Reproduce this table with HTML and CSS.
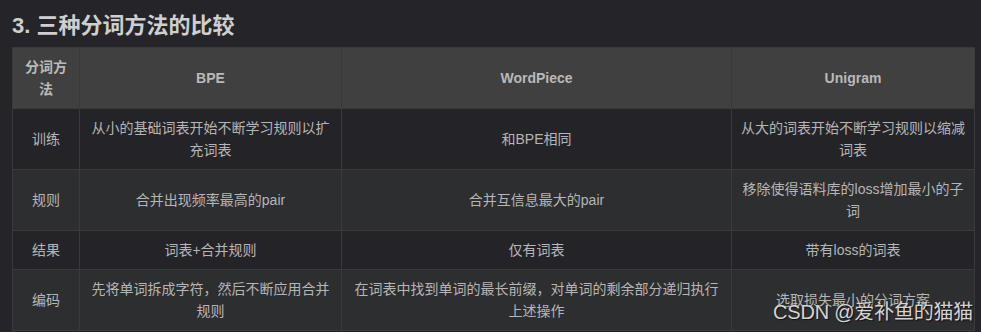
FILE: index.html
```html
<!DOCTYPE html>
<html lang="zh">
<head>
<meta charset="utf-8">
<link rel="stylesheet" href="styles.css">
</head>
<body>
<div class="page">
  <h3 class="title">3. 三种分词方法的比较</h3>
  <table class="cmp">
    <colgroup>
      <col class="c1"><col class="c2"><col class="c3"><col class="c4">
    </colgroup>
    <thead>
      <tr><th>分词方法</th><th>BPE</th><th>WordPiece</th><th>Unigram</th></tr>
    </thead>
    <tbody>
      <tr><td>训练</td><td>从小的基础词表开始不断学习规则以扩充词表</td><td>和BPE相同</td><td>从大的词表开始不断学习规则以缩减词表</td></tr>
      <tr><td>规则</td><td>合并出现频率最高的pair</td><td>合并互信息最大的pair</td><td>移除使得语料库的loss增加最小的子词</td></tr>
      <tr><td>结果</td><td>词表+合并规则</td><td>仅有词表</td><td>带有loss的词表</td></tr>
      <tr><td>编码</td><td>先将单词拆成字符，然后不断应用合并规则</td><td>在词表中找到单词的最长前缀，对单词的剩余部分递归执行上述操作</td><td>选取损失最小的分词方案</td></tr>
    </tbody>
  </table>
  <div class="watermark">CSDN @爱补鱼的猫猫</div>
</div>
</body>
</html>
```

FILE: styles.css
```css
html, body {
  margin: 0;
  padding: 0;
  background: #252529;
}
.page {
  position: relative;
  width: 981px;
  height: 332px;
  overflow: hidden;
  padding: 0 0 0 12px;
  box-sizing: border-box;
  font-family: "Liberation Sans", Arial, "Noto Sans CJK SC", sans-serif;
  color: #b6b6b6;
}
.title {
  margin: 0;
  padding-top: 13px;
  height: 47px;
  box-sizing: border-box;
  font-size: 22px;
  line-height: 26px;
  font-weight: bold;
  color: #cfcfcf;
}
.cmp {
  border-collapse: collapse;
  table-layout: fixed;
  width: 962px;
  font-size: 14px;
  line-height: 22px;
}
.c1 { width: 67px; }
.c2 { width: 262px; }
.c3 { width: 390px; }
.c4 { width: 243px; }
.cmp th, .cmp td {
  border: 1px solid #3a3a3c;
  padding: 8px 8px;
  text-align: center;
  vertical-align: middle;
}
.cmp th {
  background: #404040;
  font-weight: bold;
  color: #b9b9b9;
}
.cmp tbody tr:nth-child(odd) td {
  background: #242428;
}
.cmp tbody tr:nth-child(even) td {
  background: #2d2e30;
}
.watermark {
  position: absolute;
  left: 773px;
  top: 299px;
  font-size: 20px;
  line-height: 26px;
  color: #d4d4d4;
  text-shadow: 1px 1px 1px #111;
  white-space: nowrap;
  letter-spacing: -0.2px;
  font-family: "Liberation Sans", Arial, "Noto Sans CJK SC", sans-serif;
}
```
